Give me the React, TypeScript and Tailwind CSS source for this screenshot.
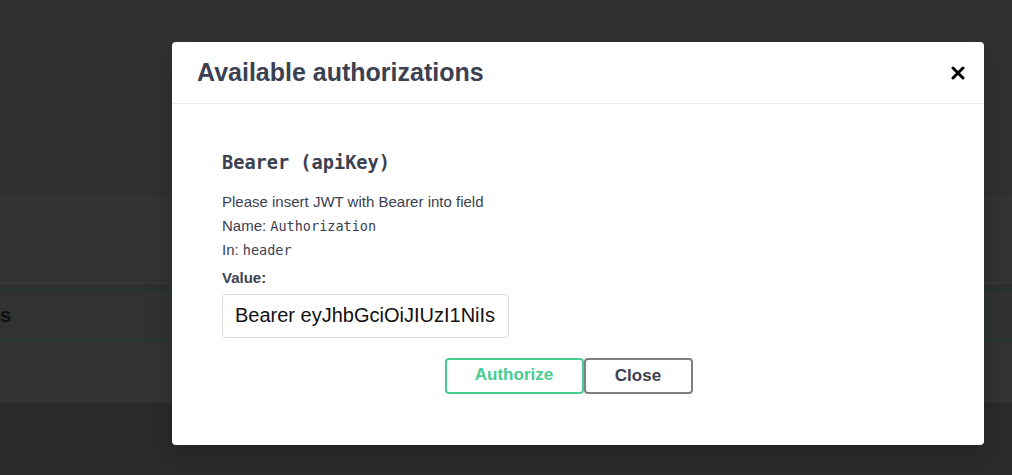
export default function App() {
  const sans = { fontFamily: '"Liberation Sans", Arial, sans-serif' };
  const mono = { fontFamily: '"DejaVu Sans Mono", monospace' };
  return (
    <div className="relative h-[475px] w-[1012px] overflow-hidden bg-[#2b2b2b]" style={sans}>
      {/* dimmed page behind the modal */}
      <div className="flex flex-col">
        <div className="h-[196px] bg-[#313131]" />
        <div className="h-[87px] bg-[#333333]" />
        <div className="h-px bg-[#3a3a3a]" />
        <div className="h-[6px] bg-[#303030]" />
        <div className="flex h-[50px] items-center border-y border-[#163a2a] bg-[#313332]">
          <span className="text-[20px] font-bold text-[#0f1012]">s</span>
        </div>
        <div className="h-[63px] bg-[#333333]" />
      </div>

      {/* modal */}
      <div className="absolute left-[172px] top-[42px] flex h-[403px] w-[812px] flex-col rounded-[4px] bg-white shadow-[0_10px_30px_rgba(0,0,0,0.2)]">
        <div className="flex h-[62px] items-center justify-between border-b border-[#ebebeb] pl-[25px] pr-[16px]">
          <h3 className="text-[25px] font-bold text-[#3b4151]">Available authorizations</h3>
          <button className="flex h-[20px] w-[20px] items-center justify-center">
            <svg width="14" height="14" viewBox="0 0 14 14">
              <path d="M2 2L12 12M12 2L2 12" stroke="#000" strokeWidth="3" strokeLinecap="round" />
            </svg>
          </button>
        </div>

        <div className="flex flex-col pl-[50px] pr-[50px] pt-[45px]">
          <h4 className="text-[18.6px] font-bold text-[#3b4151]" style={mono}>
            Bearer (apiKey)
          </h4>
          <div className="mt-[13px] flex flex-col text-[15px] text-[#3b4151]">
            <p className="leading-[24px]">Please insert JWT with Bearer into field</p>
            <p className="leading-[23px]">
              Name:{" "}
              <code className="text-[13.5px]" style={mono}>
                Authorization
              </code>
            </p>
            <p className="leading-[24px]">
              In:{" "}
              <code className="text-[13.5px]" style={mono}>
                header
              </code>
            </p>
            <label className="mt-[4px] font-bold leading-[24px]">Value:</label>
          </div>
          <input
            className="mt-[4px] h-[44px] w-[287px] rounded-[4px] border border-[#d9d9d9] px-[12px] text-[20px] text-[#111] outline-none"
            style={sans}
            defaultValue="Bearer eyJhbGciOiJIUzI1NiIsInR5cCI6IkpXVCJ9.eyJzdWIiOiIxMjM0NTY3ODkwIn0"
          />
          <div className="mt-[20px] flex justify-center pr-[19px]">
            <button className="h-[36px] w-[139px] rounded-[4px] border-2 border-[#49cc90] pb-[3px] text-[17px] font-bold text-[#49cc90]">
              Authorize
            </button>
            <button className="h-[36px] w-[109px] rounded-[4px] border-2 border-[#808080] text-[17px] font-bold text-[#3b4151]">
              Close
            </button>
          </div>
        </div>
      </div>
    </div>
  );
}
